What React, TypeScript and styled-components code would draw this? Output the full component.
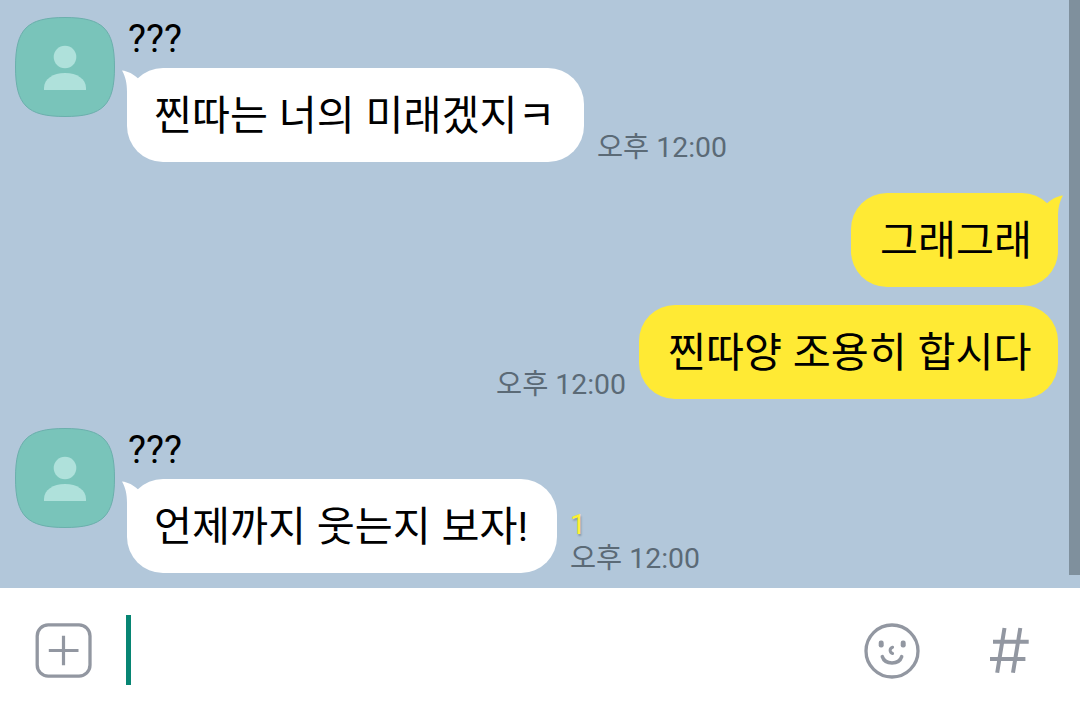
import React from 'react';
import styled, { createGlobalStyle } from 'styled-components';

interface Message {
  id: number;
  mine: boolean;
  text: string;
  width: number;
  gap: number;
  sender?: string;
  time?: string;
  unread?: number;
  tail?: boolean;
}

const messages: Message[] = [
  { id: 1, mine: false, sender: '???', text: '찐따는 너의 미래겠지ㅋ', width: 457, gap: 0, time: '오후 12:00', tail: true },
  { id: 2, mine: true, text: '그래그래', width: 207, gap: 31, tail: true },
  { id: 3, mine: true, text: '찐따양 조용히 합시다', width: 419, gap: 18, time: '오후 12:00' },
  { id: 4, mine: false, sender: '???', text: '언제까지 웃는지 보자!', width: 430, gap: 29, time: '오후 12:00', unread: 1, tail: true },
];

const ProfileImage = () => (
  <Avatar viewBox="0 0 100 100">
    <path
      d="M.5 50C.5 12 12 .5 50 .5S99.500 12 99.500 50 88 99.500 50 99.500 .5 88 .5 50Z"
      fill="#79c4ba"
      stroke="#6bafac"
      strokeWidth="1"
    />
    <circle cx="50" cy="40" r="11.300" fill="#afe1db" />
    <path d="M29 73v-2C29 62 38 56 50 56s21 6 21 15v2Z" fill="#afe1db" />
  </Avatar>
);

const MessageRow = ({ message }: { message: Message }) => {
  const { mine, sender, text, width, gap, time, unread, tail } = message;

  return (
    <Row $mine={mine} $gap={gap}>
      {!mine && <ProfileImage />}
      <div>
        {sender && <Sender>{sender}</Sender>}
        <BubbleLine $mine={mine}>
          <Bubble $mine={mine} $width={width}>
            {text}
            {tail && (
              <Tail $mine={mine} viewBox="0 0 24 36">
                <path d="M0 .4C6 1 11.500 4 15.800 8.200L24 20L8 36H5V22C5 13 3.500 6.500 0 .4Z" />
              </Tail>
            )}
          </Bubble>
          {time && (
            <Meta>
              {unread && <Unread>{unread}</Unread>}
              <Time>{time}</Time>
            </Meta>
          )}
        </BubbleLine>
      </div>
    </Row>
  );
};

const App: React.FC = () => {
  return (
    <Screen>
      <GlobalStyle />
      <ChatArea>
        {messages.map((message) => (
          <MessageRow key={message.id} message={message} />
        ))}
        <ScrollThumb />
      </ChatArea>
      <InputBar>
        <IconButton aria-label="add">
          <svg width="58" height="58" viewBox="0 0 58 58" fill="none" stroke="#9297a1">
            <rect x="3.200" y="2.900" width="52.800" height="51.200" rx="11" strokeWidth="3.300" />
            <path d="M14.800 28.500H44.500M29.500 13.700V43.300" strokeWidth="3.200" />
          </svg>
        </IconButton>
        <TextField>
          <Caret />
        </TextField>
        <Actions>
          <IconButton aria-label="emoticon">
            <svg width="58" height="58" viewBox="0 0 58 58" fill="none" stroke="#9297a1" strokeLinecap="round">
              <circle cx="29" cy="29" r="26" strokeWidth="3.300" />
              <rect x="15.700" y="18.500" width="5" height="7" rx="2.200" fill="#9297a1" stroke="none" />
              <rect x="37.700" y="18.500" width="5" height="7" rx="2.200" fill="#9297a1" stroke="none" />
              <path d="M29.600 25.200C26.300 26.200 26.300 30.500 29.600 31.500" strokeWidth="3" />
              <path d="M19.300 34.600C22 43 36 43 38.700 34.600" strokeWidth="3.500" />
            </svg>
          </IconButton>
          <IconButton aria-label="hash search">
            <svg width="58" height="58" viewBox="0 0 58 58" fill="none" stroke="#9297a1" strokeWidth="4">
              <path d="M13 19.800H48.700M10 37H45.400M24.500 6L17.200 50.700M40.300 6L33 50.700" />
            </svg>
          </IconButton>
        </Actions>
      </InputBar>
    </Screen>
  );
};

const GlobalStyle = createGlobalStyle`
  * {
    box-sizing: border-box;
  }

  body {
    margin: 0;
    overflow: hidden;
    font-family: Roboto, 'Noto Sans CJK KR', sans-serif;
  }
`;

const Screen = styled.div`
  display: flex;
  flex-direction: column;
  width: 1080px;
  height: 709px;
  background: #ffffff;
`;

const ChatArea = styled.main`
  position: relative;
  height: 588px;
  padding: 17px 22px 0 15px;
  background: #b2c7da;
`;

const Row = styled.div<{ $mine: boolean; $gap: number }>`
  display: flex;
  justify-content: ${props => props.$mine ? 'flex-end' : 'flex-start'};
  gap: 12px;
  margin-top: ${props => props.$gap}px;
`;

const Avatar = styled.svg`
  flex: none;
  width: 100px;
  height: 100px;
`;

const Sender = styled.div`
  height: 51px;
  padding-left: 1px;
  color: #000000;
  font-size: 38px;
  line-height: 44px;
`;

const BubbleLine = styled.div<{ $mine: boolean }>`
  display: flex;
  flex-direction: ${props => props.$mine ? 'row-reverse' : 'row'};
  align-items: flex-end;
  gap: 13px;
`;

const Bubble = styled.div<{ $mine: boolean; $width: number }>`
  position: relative;
  width: ${props => props.$width}px;
  height: 94px;
  padding-left: ${props => props.$mine ? 29 : 27}px;
  border-radius: 36px;
  background: ${props => props.$mine ? '#ffea34' : '#ffffff'};
  color: #000000;
  fill: ${props => props.$mine ? '#ffea34' : '#ffffff'};
  font-size: 41.3px;
  line-height: 97px;
  word-spacing: 0.5px;
  white-space: nowrap;
`;

const Tail = styled.svg<{ $mine: boolean }>`
  position: absolute;
  top: 2px;
  ${props => props.$mine ? 'right: -5px;' : 'left: -5px;'}
  width: 24px;
  height: 36px;
  transform: ${props => props.$mine ? 'scaleX(-1)' : 'none'};
`;

const Meta = styled.div`
  display: flex;
  flex-direction: column;
  margin-bottom: -3px;
  font-size: 28.4px;
  line-height: 34px;
  white-space: nowrap;
`;

const Unread = styled.span`
  color: #fff02f;
  text-shadow: 1px 2px 2px rgba(0, 0, 0, 0.25);
`;

const Time = styled.span`
  color: #5b6a76;
`;

const ScrollThumb = styled.div`
  position: absolute;
  top: 0;
  right: 0;
  width: 11px;
  height: 575px;
  background: #7f909d;
`;

const InputBar = styled.footer`
  display: flex;
  align-items: center;
  height: 121px;
  padding: 0 42px 0 34px;
`;

const IconButton = styled.button`
  display: flex;
  padding: 0;
  margin-top: 4px;
  border: none;
  background: none;
`;

const TextField = styled.div`
  flex: 1;
  padding-left: 34px;
  margin-top: 3px;
`;

const Caret = styled.div`
  width: 5px;
  height: 70px;
  background: #078573;
`;

const Actions = styled.div`
  display: flex;
  gap: 59px;
`;

export default App;
